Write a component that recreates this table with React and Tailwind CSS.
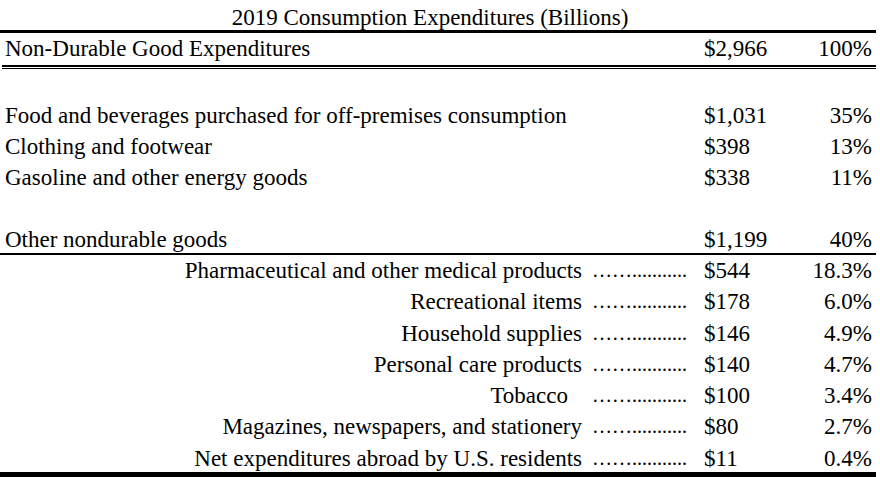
export default function App() {
  const top = [
    { label: "Food and beverages purchased for off-premises consumption", amt: "$1,031", pct: "35%" },
    { label: "Clothing and footwear", amt: "$398", pct: "13%" },
    { label: "Gasoline and other energy goods", amt: "$338", pct: "11%" },
  ];
  const sub = [
    { label: "Pharmaceutical and other medical products", amt: "$544", pct: "18.3%" },
    { label: "Recreational items", amt: "$178", pct: "6.0%" },
    { label: "Household supplies", amt: "$146", pct: "4.9%" },
    { label: "Personal care products", amt: "$140", pct: "4.7%" },
    { label: "Tobacco", amt: "$100", pct: "3.4%", extra: true },
    { label: "Magazines, newspapers, and stationery", amt: "$80", pct: "2.7%" },
    { label: "Net expenditures abroad by U.S. residents", amt: "$11", pct: "0.4%" },
  ];
  const dots = "……...........";
  return (
    <div className="w-[880px] h-[477px] overflow-hidden bg-white text-black text-[23px] font-['Liberation_Serif',serif]">
      <div className="w-[876px]">
        <div className="h-[30px] pt-[7px] leading-[22px] text-center pr-[16px] whitespace-nowrap">2019 Consumption Expenditures (Billions)</div>
        <div className="h-[3px] bg-black" />
        <div className="h-[32px] flex leading-[31px]">
          <div className="flex-1 pl-[5px] whitespace-nowrap">Non-Durable Good Expenditures</div>
          <div className="w-[90px]">$2,966</div>
          <div className="w-[82px] text-right pr-[4px]">100%</div>
        </div>
        <div className="ml-[2px] h-[2px] bg-black" />
        <div className="ml-[2px] mt-[1px] h-[1px] bg-black" />
        <div className="h-[31px]" />
        {top.map((r) => (
          <div key={r.label} className="h-[31px] flex leading-[31px]">
            <div className="flex-1 pl-[5px] whitespace-nowrap">{r.label}</div>
            <div className="w-[90px]">{r.amt}</div>
            <div className="w-[82px] text-right pr-[4px]">{r.pct}</div>
          </div>
        ))}
        <div className="h-[31px]" />
        <div className="h-[29px] flex leading-[31px]">
          <div className="flex-1 pl-[5px] whitespace-nowrap">Other nondurable goods</div>
          <div className="w-[90px]">$1,199</div>
          <div className="w-[82px] text-right pr-[4px]">40%</div>
        </div>
        <div className="h-[2px] bg-black" />
        {sub.map((r, i) => (
          <div key={r.label} className={`${i === sub.length - 1 ? "h-[29px]" : "h-[31.3px]"} flex leading-[31px]`}>
            <div className={`flex-1 text-right whitespace-nowrap ${r.extra ? "pr-[24px]" : "pr-[10px]"}`}>{r.label}</div>
            <div className="w-[112px] pr-[17px]">
              <div className="w-[95px] overflow-hidden whitespace-nowrap text-[20px]">{dots}</div>
            </div>
            <div className="w-[90px]">{r.amt}</div>
            <div className="w-[82px] text-right pr-[4px]">{r.pct}</div>
          </div>
        ))}
        <div className="h-[6px] bg-black" />
      </div>
    </div>
  );
}
